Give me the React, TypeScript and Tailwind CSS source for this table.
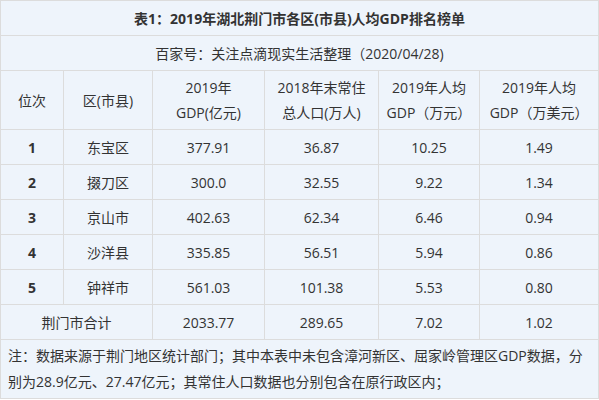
import React from 'react';

const rows = [
  ['1', '东宝区', '377.91', '36.87', '10.25', '1.49'],
  ['2', '掇刀区', '300.0', '32.55', '9.22', '1.34'],
  ['3', '京山市', '402.63', '62.34', '6.46', '0.94'],
  ['4', '沙洋县', '335.85', '56.51', '5.94', '0.86'],
  ['5', '钟祥市', '561.03', '101.38', '5.53', '0.80'],
];

const cell = 'border border-[#dcdcdc] text-center align-middle p-0';

export default function App() {
  return (
    <div
      className="w-[599px] h-[400px] bg-white text-[#333] text-[14px]"
      style={{ fontFamily: '"Open Sans", "Noto Sans CJK SC", sans-serif' }}
    >
      <table className="w-[598px] table-fixed border-collapse bg-[#eef4fb]">
        <colgroup>
          <col className="w-[63px]" />
          <col className="w-[89px]" />
          <col className="w-[112px]" />
          <col className="w-[114px]" />
          <col className="w-[101px]" />
          <col className="w-[119px]" />
        </colgroup>
        <tbody>
          <tr className="h-[35px]">
            <td colSpan={6} className={cn(cell, 'font-bold')}>
              表1：2019年湖北荆门市各区(市县)人均GDP排名榜单
            </td>
          </tr>
          <tr className="h-[35px]">
            <td colSpan={6} className={cell}>
              百家号：关注点滴现实生活整理（2020/04/28)
            </td>
          </tr>
          <tr className="h-[59px] leading-[25px]">
            <td className={cell}>位次</td>
            <td className={cell}>区(市县)</td>
            <td className={cell}>2019年<br />GDP(亿元)</td>
            <td className={cell}>2018年末常住<br />总人口(万人)</td>
            <td className={cell}>2019年人均<br />GDP（万元）</td>
            <td className={cell}>2019年人均<br />GDP（万美元）</td>
          </tr>
          {rows.map(r => (
            <tr key={r[0]} className="h-[35px]">
              <td className={cn(cell, 'font-bold')}>{r[0]}</td>
              {r.slice(1).map((v, i) => (
                <td key={i} className={cell}>{v}</td>
              ))}
            </tr>
          ))}
          <tr className="h-[35px]">
            <td colSpan={2} className={cell}>荆门市合计</td>
            <td className={cell}>2033.77</td>
            <td className={cell}>289.65</td>
            <td className={cell}>7.02</td>
            <td className={cell}>1.02</td>
          </tr>
          <tr className="h-[59px]">
            <td colSpan={6} className="border border-[#dcdcdc] text-left align-middle px-[7px] py-0 leading-[26px]">
              注：数据来源于荆门地区统计部门；其中本表中未包含漳河新区、屈家岭管理区GDP数据，分别为28.9亿元、27.47亿元；其常住人口数据也分别包含在原行政区内；
            </td>
          </tr>
        </tbody>
      </table>
    </div>
  );
}

function cn(...c: string[]) {
  return c.join(' ');
}
